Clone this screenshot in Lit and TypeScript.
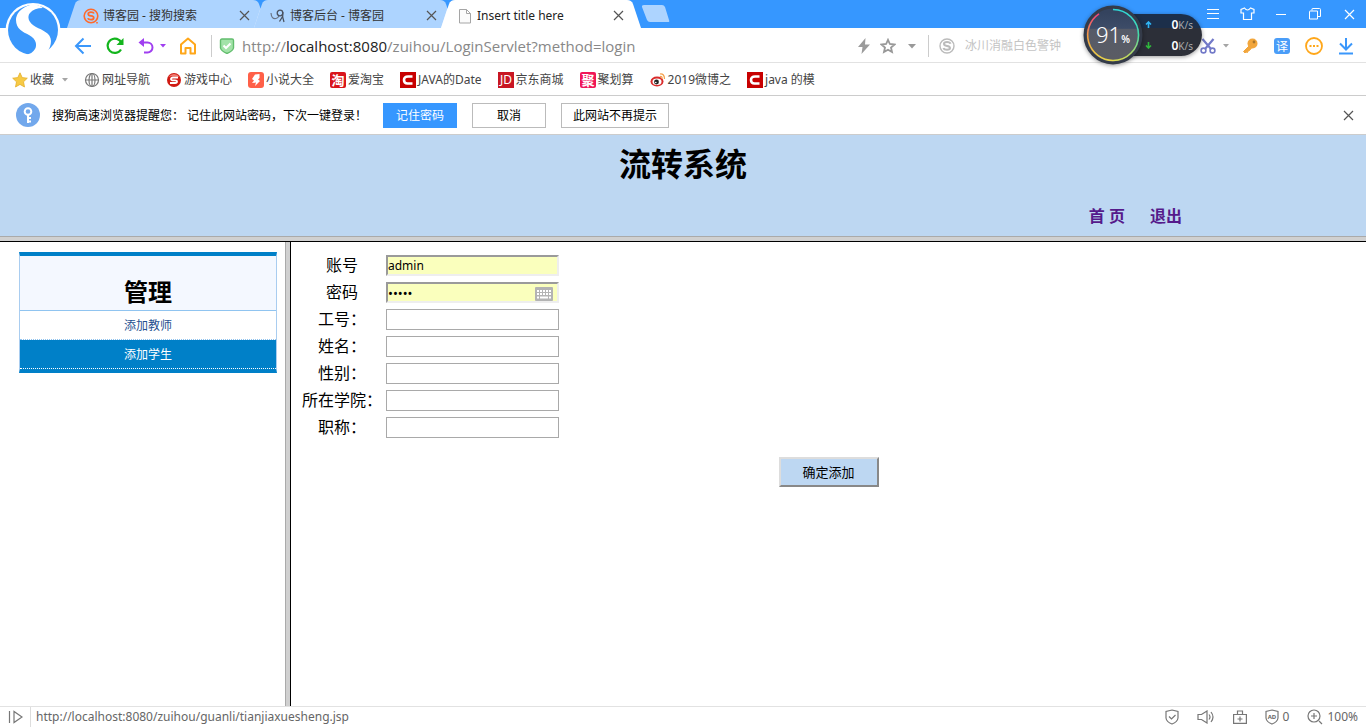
import { LitElement, html, css, svg } from "lit";
import { customElement, property } from "lit/decorators.js";

const uiFont = css`"Noto Sans", "Noto Sans CJK SC", sans-serif`;

const base = css`
  *, *::before, *::after { box-sizing: border-box; }
  button, input { font: inherit; color: inherit; margin: 0; }
  a { color: inherit; text-decoration: none; }
  svg { display: block; flex: none; }
  .icon-btn {
    display: flex; align-items: center; justify-content: center;
    border: 0; padding: 0; background: none; height: 100%;
  }
`;

const cross = svg`<path d="M1 1 10 10M10 1 1 10" fill="none" stroke="currentColor" stroke-width="1.2"/>`;
const closeIcon = html`<svg width="11" height="11" viewBox="0 0 11 11">${cross}</svg>`;

@customElement("browser-tabs")
class BrowserTabs extends LitElement {
  static styles = [base, css`
    :host { display: flex; height: 28px; background: #3697ff; padding-left: 67px; font-size: 12px; color: #333; }
    .tab { position: relative; width: 200px; height: 28px; display: flex; align-items: center; padding: 3px 17px 0 16px; }
    .tab + .tab { margin-left: -13px; }
    .shape { position: absolute; inset: 0; }
    .label, .fav, .x { position: relative; }
    .label { flex: 1; text-align: left; border: 0; background: none; padding: 0 0 0 4px; white-space: nowrap; line-height: 18px; }
    .x { border: 0; background: none; padding: 0; color: #555; }
    .active { color: #222; }
    .new { margin: 5px 0 0; width: 29px; height: 18px; border: 0; padding: 0; background: none; }
    .win { margin-left: auto; display: flex; color: #fff; }
    .win .icon-btn { width: 34px; }
  `];

  private tab(label: string, icon: unknown, active = false) {
    return html`<div class="tab ${active ? "active" : ""}" role="presentation">
      <svg class="shape" width="200" height="28" viewBox="0 0 200 28">
        <path d="M0 28 8 4Q9.500 0 14 0H186Q190.500 0 192 4L200 28z" fill=${active ? "#fff" : "#add4ff"}/>
        ${active ? "" : svg`<path d="M187 28 193.500 8 200 28z" fill="#e1efff"/>`}
      </svg>
      <svg class="fav" width="16" height="16" viewBox="0 0 16 16">${icon}</svg>
      <button class="label" role="tab" aria-selected=${active}>${label}</button>
      <button class="x" aria-label="关闭">${closeIcon}</button>
    </div>`;
  }

  render() {
    return html`
      ${this.tab("博客园 - 搜狗搜索", svg`
        <circle cx="8" cy="8" r="6.800" fill="none" stroke="#ff6a2b" stroke-width="1.600"/>
        <path d="M11 5.500Q10.500 4.200 8 4.200C4.300 4.200 4.300 7.500 8 7.900 11.800 8.300 11.500 11.600 8 11.600Q5.300 11.600 4.800 10.300" fill="none" stroke="#ff6a2b" stroke-width="1.800"/>
        <path d="M14 14v1.500" stroke="#ff6a2b" stroke-width="1.600"/>`)}
      ${this.tab("博客后台 - 博客园", svg`
        <path d="M1 5Q1.500 11.500 6 10.500 8 10 9 8" fill="none" stroke="#6a7486" stroke-width="1.200"/>
        <circle cx="10" cy="5" r="2.800" fill="none" stroke="#4a5260" stroke-width="1.300"/>
        <path d="M12.800 4Q12 9 14 14M12.600 8.500 9.500 13.500" fill="none" stroke="#4a5260" stroke-width="1.300"/>`)}
      ${this.tab("Insert title here", svg`
        <path d="M2.500 1.500h7l4 4v9.500h-11z M9.500 1.500v4h4" fill="#fbfbfb" stroke="#a5a5a5"/>`, true)}
      <button class="new" aria-label="新建标签页"><svg width="29" height="18" viewBox="0 0 29 18"><path d="M3 0H21Q23 0 24 2L28 15Q29 17 27 17H9Q7 17 6 15L1 2Q.5 0 3 0z" fill="#add4ff"/></svg></button>
      <div class="win">
        <button class="icon-btn" aria-label="菜单"><svg width="12" height="12" viewBox="0 0 12 12"><path d="M0 1.500h12M0 5.500h12M0 10.500h12" stroke="#fff"/></svg></button>
        <button class="icon-btn" aria-label="皮肤"><svg width="15" height="14" viewBox="0 0 15 14"><path d="M4.500 1 1 2.500V6H3.500V12.500H11.500V6H14V2.500L10.500 1Q7.500 5 4.500 1z" fill="none" stroke="#fff" stroke-width="1.200"/></svg></button>
        <button class="icon-btn" aria-label="最小化"><svg width="10" height="10" viewBox="0 0 10 10"><path d="M0 5.500h10" stroke="#fff"/></svg></button>
        <button class="icon-btn" aria-label="还原"><svg width="12" height="12" viewBox="0 0 12 12"><path d="M3 2.500V1Q3 .5 3.500 .5H10.500Q11.500 .5 11.500 1.500V8.500H9M.5 3.500Q.5 3 1 3H8.500V11H.5z" fill="none" stroke="#fff"/></svg></button>
        <button class="icon-btn" aria-label="关闭窗口">${closeIcon}</button>
      </div>`;
  }
}

@customElement("browser-toolbar")
class BrowserToolbar extends LitElement {
  static styles = [base, css`
    :host { box-sizing: border-box; display: flex; align-items: center; height: 35px; background: #fff; border-bottom: 1px solid #e2e2e2; padding: 2px 4px 0 67px; }
    .w32 { width: 32px; }
    .w24 { width: 24px; }
    .w20 { width: 20px; }
    .w16 { width: 16px; color: #a5a5a5; }
    .undo { justify-content: flex-end; }
    .purple { color: #a03ff0; }
    .sep { width: 1px; height: 22px; background: #ccc; }
    .home { margin: 0 7px 0 1px; }
    .url { flex: 1; min-width: 0; display: flex; align-items: center; padding-left: 7px; gap: 7px; font-family: "Open Sans", "Noto Sans CJK SC", sans-serif; font-size: 15px; line-height: 20px; color: #888; }
    .host { color: #222; }
    .text { white-space: nowrap; overflow: hidden; }
    .search { width: 269px; display: flex; align-items: center; gap: 10px; padding-left: 10px; }
    .search input { flex: 1; min-width: 0; border: 0; padding: 0; outline: 0; background: none; font-size: 12px; line-height: 18px; }
    .search input::placeholder { color: #c4c4c4; opacity: 1; }
    .caret { margin-right: 4px; }
  `];

  render() {
    return html`
      <button class="icon-btn w32" aria-label="后退"><svg width="18" height="18" viewBox="0 0 18 18"><path d="M17 9H2M9.500 1.500 2 9l7.500 7.500" fill="none" stroke="#3a97fb" stroke-width="2"/></svg></button>
      <button class="icon-btn w32" aria-label="刷新"><svg width="20" height="18" viewBox="0 0 20 18"><path d="M16.500 6A7.200 7.200 0 1 0 16 12.500" fill="none" stroke="#13b51d" stroke-width="2.200"/><path d="M18.500 1v7h-7z" fill="#13b51d"/></svg></button>
      <button class="icon-btn w24 undo" aria-label="撤销"><svg width="18" height="18" viewBox="0 0 18 18"><path d="M3 5.500H10.500a5 5 0 0 1 0 10H7" fill="none" stroke="#a03ff0" stroke-width="2"/><path d="M7 1v9L1.500 5.500z" fill="#a03ff0"/></svg></button>
      <button class="icon-btn w16 purple" aria-label="撤销列表"><svg width="6" height="4" viewBox="0 0 6 4"><path d="M0 0h6L3 3.500z" fill="currentColor"/></svg></button>
      <button class="icon-btn w32 home" aria-label="主页"><svg width="18" height="18" viewBox="0 0 18 18"><path d="M2 7.500 9 1.500l7 6V16.500H11.500V11h-5v5.500H2z" fill="none" stroke="#ffa71a" stroke-width="2" stroke-linejoin="round"/></svg></button>
      <div class="sep"></div>
      <div class="url">
        <svg width="16" height="16" viewBox="0 0 16 16"><path d="M1.500 2.500Q1.500 1 3 1h10q1.500 0 1.500 1.500V10Q14 13 8 15.500 2 13 1.500 10z" fill="#a3e3a9" stroke="#62bd6d" stroke-width="1.400"/><path d="M4.500 7.500 7 10l4.500-4.500" fill="none" stroke="#fff" stroke-width="2"/></svg>
        <div class="text" role="textbox" aria-label="地址栏">http://<span class="host">localhost:8080</span>/zuihou/LoginServlet?method=login</div>
      </div>
      <button class="icon-btn w24" aria-label="极速模式"><svg width="12" height="16" viewBox="0 0 12 16"><path d="M7.500 0 0 9h4.500L3.500 16 12 6.500H7z" fill="#9b9b9b"/></svg></button>
      <button class="icon-btn w24" aria-label="收藏"><svg width="16" height="16" viewBox="0 0 16 16"><path d="M8 1.800 9.900 6 14.500 6.500 11 9.500 12 14 8 11.700 4 14 5 9.500 1.500 6.500 6.100 6z" fill="none" stroke="#999" stroke-width="1.800"/></svg></button>
      <button class="icon-btn w24 caret" aria-label="地址列表"><svg width="8" height="5" viewBox="0 0 8 5"><path d="M0 0h8L4 4.500z" fill="#999"/></svg></button>
      <div class="sep"></div>
      <label class="search">
        <svg width="16" height="16" viewBox="0 0 16 16"><circle cx="8" cy="8" r="7" fill="none" stroke="#bbb" stroke-width="1.400"/><path d="M11.500 5.800Q11 4 8 4C4 4 4 7.500 8 7.900 12 8.300 12 11.800 8 11.800Q5 11.800 4.500 10" fill="none" stroke="#bbb" stroke-width="2"/></svg>
        <input type="text" aria-label="搜索" placeholder="冰川消融白色警钟">
      </label>
      <button class="icon-btn w20" aria-label="截图"><svg width="16" height="16" viewBox="0 0 16 16"><path d="M2.500 1 11 11M13.500 1 5 11" stroke="#7279c8" stroke-width="2.200"/><circle cx="3.500" cy="12.500" r="2.400" fill="none" stroke="#7279c8" stroke-width="1.600"/><circle cx="12.500" cy="12.500" r="2.400" fill="none" stroke="#7279c8" stroke-width="1.600"/></svg></button>
      <button class="icon-btn w16" aria-label="截图选项"><svg width="6" height="4" viewBox="0 0 6 4"><path d="M0 0h6L3 3.500z" fill="currentColor"/></svg></button>
      <button class="icon-btn w32" aria-label="密码"><svg width="16" height="16" viewBox="0 0 16 16"><path d="M7 8 1.500 13.500 3 15l1-1 1.500.5L6 13l1.500-.5L9.500 10" fill="#f2a63c" stroke="#f2a63c"/><circle cx="10.500" cy="5.500" r="5" fill="#f2a63c"/><circle cx="12" cy="4" r="1.400" fill="#a8752c"/></svg></button>
      <button class="icon-btn w32" aria-label="翻译"><svg width="16" height="16" viewBox="0 0 16 16"><rect width="16" height="16" rx="3" fill="#4a9df8"/><text x="8" y="12.500" font-size="12" text-anchor="middle" fill="#fff">译</text></svg></button>
      <button class="icon-btn w32" aria-label="更多"><svg width="18" height="18" viewBox="0 0 18 18"><circle cx="9" cy="9" r="8" fill="none" stroke="#ffa71a" stroke-width="1.800"/><path d="M4.500 9h2M8 9h2M11.500 9h2" stroke="#ffa71a" stroke-width="2"/></svg></button>
      <button class="icon-btn w32" aria-label="下载"><svg width="16" height="18" viewBox="0 0 16 18"><path d="M8 1v11M2 6.500 8 12.500l6-6M1 16.500h14" fill="none" stroke="#3a97fb" stroke-width="2"/></svg></button>`;
  }
}

const cMark = svg`<rect width="16" height="16" fill="#c80000"/><path d="M12.500 4.500H8Q4 4.500 4 8t3.500 3.500h5" fill="none" stroke="#fff" stroke-width="2.600"/>`;

const bookmarks: [string, unknown][] = [
  ["网址导航", svg`<g fill="none" stroke="#777" stroke-width="1.200"><circle cx="8" cy="8" r="6.500"/><ellipse cx="8" cy="8" rx="3" ry="6.500"/><path d="M8 1.500v13M1.500 8h13"/></g>`],
  ["游戏中心", svg`<circle cx="8" cy="8" r="7" fill="#d01a12"/><path d="M2 5Q8-1 14 5 8 3 2 5z" fill="#ef7b70"/><path d="M12 5.500H7Q5 5.500 5 7t2 1.300h2Q11 8.300 11 9.700T9 11H4" fill="none" stroke="#fff" stroke-width="1.800"/>`],
  ["小说大全", svg`<rect width="16" height="16" rx="3" fill="#ff6048"/><path d="M7 2.500 11.500 2v4L10 7.500 12 9 7 14 8 10.500 4 11 6 8.500 4 7z" fill="#fff"/>`],
  ["爱淘宝", svg`<rect width="16" height="16" rx="2" fill="#d9151c"/><text x="8" y="12.500" font-size="13" font-weight="700" text-anchor="middle" fill="#fff">淘</text>`],
  ["JAVA的Date", cMark],
  ["京东商城", svg`<rect width="16" height="16" fill="#c81623"/><text x="8" y="12" font-size="12" text-anchor="middle" fill="#fff">JD</text>`],
  ["聚划算", svg`<rect width="16" height="16" rx="2" fill="#f01657"/><text x="8" y="12.500" font-size="13" font-weight="700" text-anchor="middle" fill="#fff">聚</text>`],
  ["2019微博之", svg`<ellipse cx="7" cy="9.500" rx="6.500" ry="5" fill="#d92b2b"/><ellipse cx="7" cy="9.800" rx="4.500" ry="3.300" fill="#fff"/><circle cx="6.500" cy="10" r="2.400" fill="#222"/><circle cx="5.800" cy="10.500" r=".8" fill="#fff"/><path d="M10 2Q14.500 1.500 14.500 7M10 4.500Q12.500 4 12 7" fill="none" stroke="#f5a04a" stroke-width="1.200"/>`],
  ["java 的模", cMark],
];

@customElement("bookmark-bar")
class BookmarkBar extends LitElement {
  static styles = [base, css`
    :host { box-sizing: border-box; display: flex; align-items: center; gap: 16px; height: 33px; padding: 1px 12px 0; background: #fff; border-bottom: 1px solid #ccc; font-size: 12px; line-height: 18px; color: #444; }
    .item { display: flex; align-items: center; gap: 2px; white-space: nowrap; border: 0; background: none; padding: 0; }
    .fold { color: #a5a5a5; margin-left: 6px; }
  `];
  render() {
    return html`
      <button class="item"><svg width="16" height="16" viewBox="0 0 16 16"><path d="M8 .8 10.200 5.600 15.300 6.200 11.500 9.800 12.500 15 8 12.400 3.500 15 4.500 9.800.7 6.200 5.800 5.600z" fill="#f7ca45" stroke="#e3ae2b" stroke-width=".8"/></svg>收藏<svg class="fold" width="6" height="4" viewBox="0 0 6 4"><path d="M0 0h6L3 3.500z" fill="currentColor"/></svg></button>
      ${bookmarks.map(([t, i]) => html`<a class="item" href="#"><svg width="16" height="16" viewBox="0 0 16 16">${i}</svg>${t}</a>`)}`;
  }
}

@customElement("password-prompt")
class PasswordPrompt extends LitElement {
  static styles = [base, css`
    :host { box-sizing: border-box; display: flex; align-items: center; height: 39px; padding: 0 12px 0 16px; background: #fff; border-bottom: 1px solid #ccc; font-size: 12px; line-height: 18px; color: #000; }
    .msg { margin: 0 16px 0 12px; padding-top: 1px; white-space: pre; }
    .btn { width: 74px; height: 25px; margin-right: 15px; padding: 1px 0 0; border: 1px solid #bbb; background: #fff; }
    .primary { background: #3697ff; border-color: #3697ff; color: #fff; }
    .wide { width: 108px; }
    .x { margin-left: auto; color: #555; }
  `];
  render() {
    return html`
      <svg width="24" height="24" viewBox="0 0 24 24"><circle cx="12" cy="12" r="12" fill="#72a8ec"/><circle cx="12" cy="8.500" r="3.300" fill="none" stroke="#fff" stroke-width="2"/><path d="M12 12v8M12 15h3M12 18.500h3" stroke="#fff" stroke-width="2"/></svg>
      <span class="msg">搜狗高速浏览器提醒您： 记住此网站密码，下次一键登录！</span>
      <button class="btn primary">记住密码</button>
      <button class="btn">取消</button>
      <button class="btn wide">此网站不再提示</button>
      <button class="icon-btn x" aria-label="关闭提示">${closeIcon}</button>`;
  }
}

@customElement("side-menu")
class SideMenu extends LitElement {
  static styles = [base, css`
    :host { display: block; border: 1px solid #a9cdf0; border-width: 4px 1px; border-top-color: #0080c8; border-bottom-color: #0080c8; text-align: center; font-size: 12px; }
    .title { margin: 0; padding: 20px 0 2px; height: 55px; font-size: 24px; line-height: 32px; color: #000; background: #f4f8ff; border-bottom: 1px solid #90c4f0; }
    .link { display: block; height: 29px; line-height: 29px; color: #1f4f8f; border-bottom: 1px dotted #90c4f0; }
    .link.active { background: #0080c8; color: #fff; border-bottom-color: #fff; }
  `];
  render() {
    return html`<h2 class="title">管理</h2>
      <a class="link" href="#">添加教师</a>
      <a class="link active" href="#">添加学生</a>`;
  }
}

@customElement("teacher-form")
class TeacherForm extends LitElement {
  static styles = [base, css`
    :host { display: block; padding: 13px 0 0; }
    .fields { display: grid; grid-template-columns: 80px 173px; column-gap: 4px; row-gap: 6px; padding-left: 11px; }
    .label { font-size: 16px; line-height: 21px; text-align: center; white-space: nowrap; color: #000; }
    .box { position: relative; display: flex; }
    .input { width: 100%; height: 21px; padding: 0 1px; border: 1px solid #a9a9a9; background: #fff; font-size: 12px; line-height: 17px; outline: 0; color: #000; }
    .filled { background: #faffbd; border: 2px solid; border-color: #9a9a9a #eee #eee #9a9a9a; padding: 0; }
    .secret { font-size: 13px; }
    .keys { position: absolute; right: 6px; top: 5px; }
    .actions { display: flex; justify-content: center; padding-top: 19px; }
    .submit { width: 100px; height: 30px; padding: 0; background: #bdd7f2; border: 2px solid; border-color: #ddd #888 #888 #ddd; font-size: 13px; line-height: 24px; color: #000; }
  `];
  private names = ["工号：", "姓名：", "性别：", "所在学院：", "职称："];
  render() {
    return html`<form>
      <div class="fields">
        <label class="label" for="account">账号</label>
        <div class="box"><input class="input filled" id="account" type="text" value="admin"></div>
        <label class="label" for="pwd">密码</label>
        <div class="box"><input class="input filled secret" id="pwd" type="password" value="admin" autocomplete="off">
          <svg class="keys" width="18" height="14" viewBox="0 0 18 14"><rect width="18" height="14" rx="1" fill="#b3b3b3"/><path d="M2 4h14M2 7h14" stroke="#fff" stroke-width="2" stroke-dasharray="2 1"/><path d="M2 10.500h2M5 10.500h8M14 10.500h2" stroke="#fff" stroke-width="2"/></svg></div>
        ${this.names.map((n, i) => html`
          <label class="label" for="f${i}">${n}</label>
          <div class="box"><input class="input" id="f${i}" type="text"></div>`)}
      </div>
      <div class="actions"><button class="submit" type="button">确定添加</button></div>
    </form>`;
  }
}

@customElement("status-bar")
class StatusBar extends LitElement {
  static styles = [base, css`
    :host { box-sizing: border-box; display: flex; align-items: center; height: 22px; background: #fff; border-top: 1px solid #e2e2e2; padding: 0 8px 1px 0; font-size: 12px; line-height: 18px; color: #666; }
    .play { width: 31px; border-right: 1px solid #ddd; }
    .url { padding-left: 5px; flex: 1; }
    .tools { display: flex; height: 100%; gap: 18px; }
    .tool { gap: 4px; white-space: nowrap; }
  `];
  render() {
    return html`
      <button class="icon-btn play" aria-label="侧边栏"><svg width="15" height="14" viewBox="0 0 15 14"><path d="M1.500 1v12M6 1.500v11L14 7z" fill="none" stroke="#777" stroke-width="1.200"/></svg></button>
      <span class="url">http://localhost:8080/zuihou/guanli/tianjiaxuesheng.jsp</span>
      <div class="tools">
        <button class="icon-btn tool" aria-label="安全"><svg width="14" height="16" viewBox="0 0 14 16"><path d="M7 1 13 2.500V9Q12.500 13 7 15 1.500 13 1 9V2.500zM4 7.500 6.500 10 10.500 6" fill="none" stroke="#777" stroke-width="1.200"/></svg></button>
        <button class="icon-btn tool" aria-label="声音"><svg width="18" height="14" viewBox="0 0 18 14"><path d="M1 4.500h3.500L10 1v12L4.500 9.500H1zM12 4.500q2 2.500 0 5M14 2q4 5 0 10" fill="none" stroke="#777" stroke-width="1.200"/></svg></button>
        <button class="icon-btn tool" aria-label="医生"><svg width="14" height="14" viewBox="0 0 14 14"><path d="M.6 4.500h12.800v8.900H.6zM4.500 4.500V1h5v3.500M7 6.500v5M4.500 9h5" fill="none" stroke="#777" stroke-width="1.200"/></svg></button>
        <button class="icon-btn tool"><svg width="14" height="16" viewBox="0 0 14 16"><path d="M7 1 13 2.500V9Q12.500 13 7 15 1.500 13 1 9V2.500z" fill="none" stroke="#777" stroke-width="1.200"/><text x="7" y="10" font-size="6" font-weight="700" text-anchor="middle" fill="#666">AD</text></svg>0</button>
        <button class="icon-btn tool"><svg width="16" height="16" viewBox="0 0 16 16"><path d="M12 12l3 3M4 7h6M7 4v6" stroke="#777" stroke-width="1.200"/><circle cx="7" cy="7" r="6" fill="none" stroke="#777" stroke-width="1.200"/></svg>100%</button>
      </div>`;
  }
}

@customElement("speed-gauge")
class SpeedGauge extends LitElement {
  @property({ type: Number }) percent = 91;
  static styles = [base, css`
    :host { display: block; width: 120px; height: 60px; color: #fff; }
    .pill { position: absolute; left: 30px; top: 9px; width: 89px; height: 42px; border-radius: 0 21px 21px 0; background: linear-gradient(#1c2f4a 0 14px, #2c2f38 14px); box-shadow: 0 1px 4px rgba(0,0,0,.4); display: grid; grid-template-rows: 21px 21px; }
    .row { display: flex; align-items: center; justify-content: space-between; padding: 0 9px 0 32px; font-size: 10px; color: #aaa; line-height: 21px; }
    .num { font-size: 12px; font-weight: 600; color: #fff; }
    .dial { position: absolute; left: 0; top: 0; width: 60px; height: 60px; filter: drop-shadow(0 1px 2px rgba(0,0,0,.4)); }
    .value { position: absolute; left: 13px; top: 14px; display: flex; align-items: baseline; font-size: 22px; line-height: 30px; font-weight: 300; }
    .unit { font-size: 10px; font-weight: 600; }
  `];
  render() {
    return html`
      <div class="pill">
        <div class="row"><svg width="7" height="7" viewBox="0 0 7 7"><path d="M3.500 7V1M1 3.500 3.500 1 6 3.500" fill="none" stroke="#2fb5f5" stroke-width="1.600"/></svg><span><span class="num">0</span>K/s</span></div>
        <div class="row"><svg width="7" height="7" viewBox="0 0 7 7"><path d="M3.500 0v6M1 3.500 3.500 6 6 3.500" fill="none" stroke="#2fb83c" stroke-width="1.600"/></svg><span><span class="num">0</span>K/s</span></div>
      </div>
      <svg class="dial" viewBox="0 0 60 60">
        <defs>
          <linearGradient id="face" x2="0" y2="1"><stop offset=".1" stop-color="#34435e"/><stop offset=".38" stop-color="#3d4c68"/><stop offset=".4" stop-color="#565b68"/><stop offset=".9" stop-color="#5a5c64"/></linearGradient>
          <linearGradient id="left" x2="0" y2="1"><stop offset="0" stop-color="#f0407e"/><stop offset=".5" stop-color="#f7a23d"/><stop offset="1" stop-color="#e8d64a"/></linearGradient>
          <linearGradient id="right" x2="0" y2="1"><stop offset="0" stop-color="#2fd8d8"/><stop offset=".5" stop-color="#45dba8"/><stop offset="1" stop-color="#d8dc50"/></linearGradient>
        </defs>
        <circle cx="30" cy="30" r="28" fill="url(#face)" stroke="#343b49" stroke-width="3"/>
        <path d="M30 4.500a25.500 25.500 0 0 1 0 51" fill="none" stroke="url(#right)" stroke-width="1.500"/>
        <path d="M30 55.500A25.500 25.500 0 0 1 16 8.800" fill="none" stroke="url(#left)" stroke-width="1.500"/>
      </svg>
      <div class="value">${this.percent}<span class="unit">%</span></div>`;
  }
}

@customElement("app-root")
class AppRoot extends LitElement {
  static styles = [base, css`
    :host { display: flex; flex-direction: column; position: relative; min-height: 100vh; background: #fff; font-family: ${uiFont}; }
    .logo { position: absolute; left: 4px; top: 1px; }
    .gauge { position: absolute; right: 163px; top: 5px; }
    .banner { background: #bdd7f2; height: 101px; display: flex; flex-direction: column; color: #000; }
    .heading { margin: 0; padding-top: 7px; text-align: center; font-size: 32px; line-height: 44px; }
    .nav { display: flex; justify-content: flex-end; gap: 25px; padding: 18px 184px 0 0; font-size: 16px; line-height: 24px; font-weight: 700; color: #551a8b; }
    .hsplit { height: 6px; background: #d0d0d0; border-top: 1px solid #aaa; border-bottom: 1px solid #000; }
    .frames { flex: 1; display: grid; grid-template-columns: 285px 6px 1fr; }
    .side { padding: 10px 8px 0 19px; }
    .vsplit { background: #d0d0d0; border-left: 1px solid #aaa; border-right: 1px solid #000; }
  `];
  render() {
    return html`
      <browser-tabs></browser-tabs>
      <browser-toolbar></browser-toolbar>
      <bookmark-bar></bookmark-bar>
      <password-prompt></password-prompt>
      <header class="banner">
        <h1 class="heading">流转系统</h1>
        <nav class="nav"><a href="#">首 页</a><a href="#">退出</a></nav>
      </header>
      <div class="hsplit"></div>
      <main class="frames">
        <aside class="side"><side-menu></side-menu></aside>
        <div class="vsplit"></div>
        <teacher-form></teacher-form>
      </main>
      <status-bar></status-bar>
      <svg class="logo" width="58" height="58" viewBox="0 0 58 58">
        <circle cx="29" cy="29.500" r="27.500" fill="#fff"/>
        <circle cx="29" cy="29" r="25" fill="#3a97fb"/>
        <path d="M26 4Q12 9 12 19C12 28 19 31 25 34C33 38 33 45 31 48Q28 53 22 53.500L24 57L40 56L42.500 52Q47 46 47 40C47 32 38 29 32 26C24 22 23 15 26 12Q30 7 39 7Q33 2 26 4z" fill="#fff"/>
      </svg>
      <speed-gauge class="gauge"></speed-gauge>`;
  }
}
